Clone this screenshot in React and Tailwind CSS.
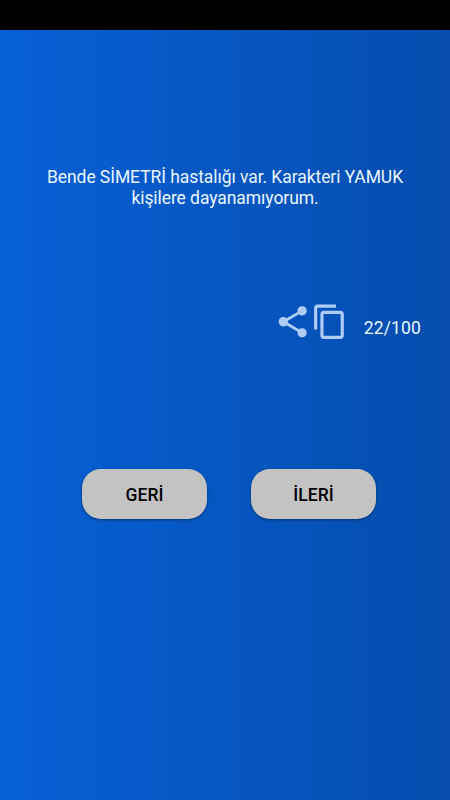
import { MdContentCopy, MdShare } from 'react-icons/md';

export default function App() {
  return (
    <div className="flex h-[800px] w-[450px] flex-col overflow-hidden bg-linear-to-r from-[#0760d6] to-[#064dae] font-['Roboto',sans-serif]">
      <div className="h-[30px] shrink-0 bg-black" />

      <main className="flex flex-col pt-[137px]">
        <p className="px-8 text-center text-[17.5px] leading-[20.5px] tracking-[-0.07px] text-[#eaf6ff]">
          Bende SİMETRİ hastalığı var. Karakteri YAMUK
          <br />
          kişilere dayanamıyorum.
        </p>

        <div className="mt-[95px] flex justify-end pr-[29px] text-[#b0cdf6]">
          <button type="button" aria-label="Paylaş">
            <MdShare className="size-[37.5px]" />
          </button>
          <button type="button" aria-label="Kopyala">
            <MdContentCopy className="size-[37.5px]" />
          </button>
          <span className="ml-[15px] pt-[15px] text-[17.5px] leading-[21px] tracking-[0.15px] text-[#eaf6ff]">22/100</span>
        </div>

        <div className="mt-[128px] flex gap-[44px] pl-[82px]">
          <NavButton label="GERİ" />
          <NavButton label="İLERİ" />
        </div>
      </main>
    </div>
  );
}

function NavButton({ label }) {
  return (
    <button
      type="button"
      className="h-[50px] w-[125px] rounded-[19px] bg-[#c3c3c3] pt-[3px] text-[17.5px] font-medium text-black shadow-[0_1px_3px_rgba(0,0,0,0.4)]"
    >
      {label}
    </button>
  );
}
